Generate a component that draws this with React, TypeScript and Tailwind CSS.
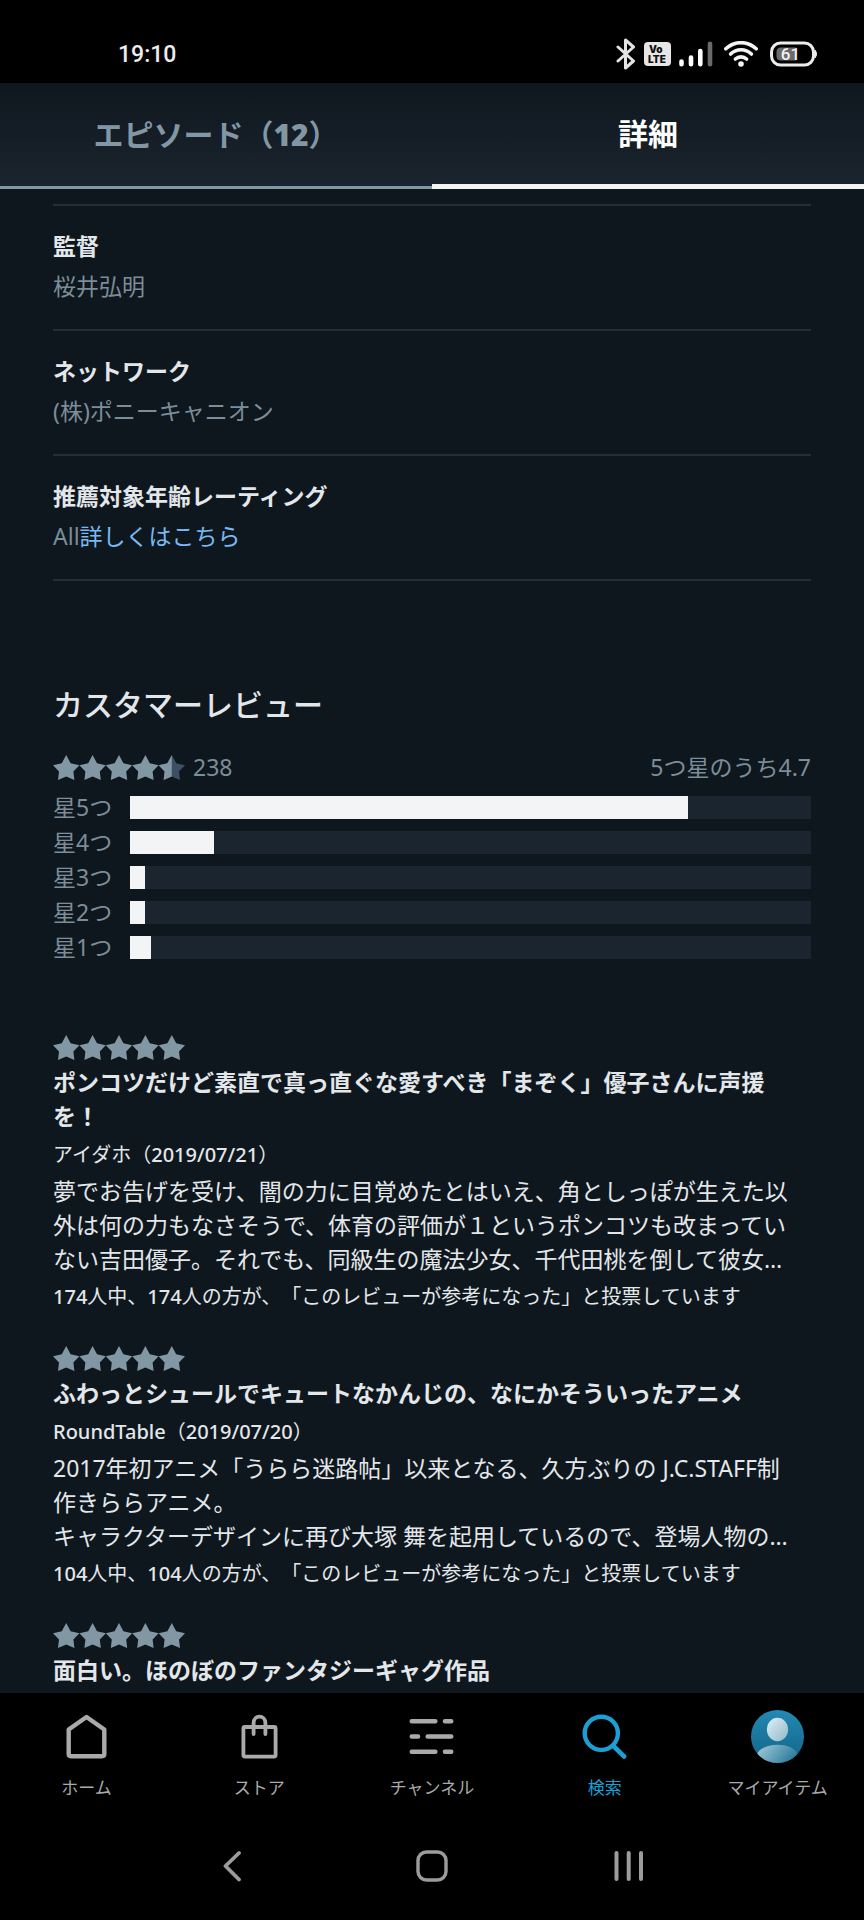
import React, { useState } from 'react';

interface Detail {
  label: string;
  value: string;
  link?: string;
}

interface Review {
  title: string;
  author: string;
  date: string;
  body?: string[];
  votes?: number;
}

const details: Detail[] = [
  { label: '監督', value: '桜井弘明' },
  { label: 'ネットワーク', value: '(株)ポニーキャニオン' },
  { label: '推薦対象年齢レーティング', value: 'All', link: '詳しくはこちら' },
];

const ratings = [
  { stars: 5, percent: 82 },
  { stars: 4, percent: 12.3 },
  { stars: 3, percent: 2.2 },
  { stars: 2, percent: 2.2 },
  { stars: 1, percent: 3.1 },
];

const reviews: Review[] = [
  {
    title: 'ポンコツだけど素直で真っ直ぐな愛すべき「まぞく」優子さんに声援を！',
    author: 'アイダホ',
    date: '2019/07/21',
    body: [
      '夢でお告げを受け、闇の力に目覚めたとはいえ、角としっぽが生えた以外は何の力もなさそうで、体育の評価が１というポンコツも改まっていない吉田優子。それでも、同級生の魔法少女、千代田桃を倒して彼女…',
    ],
    votes: 174,
  },
  {
    title: 'ふわっとシュールでキュートなかんじの、なにかそういったアニメ',
    author: 'RoundTable',
    date: '2019/07/20',
    body: [
      '2017年初アニメ「うらら迷路帖」以来となる、久方ぶりの J.C.STAFF制作きららアニメ。',
      'キャラクターデザインに再び大塚 舞を起用しているので、登場人物の…',
    ],
    votes: 104,
  },
  {
    title: '面白い。ほのぼのファンタジーギャグ作品',
    author: '',
    date: '',
  },
];

const STAR = 'M13.2 0 L17.6 8.2 L26.4 10.2 L20.4 16.6 L21.4 25 L13.2 21.6 L5 25 L6 16.6 L0 10.2 L8.8 8.2 Z';
const STAR_LEFT = 'M13.2 0 V21.6 L5 25 L6 16.6 L0 10.2 L8.8 8.2 Z';

const Stars = ({ half = false }: { half?: boolean }) => (
  <svg className="block h-[25px] w-[132px]" viewBox="0 0 132 25" role="img" aria-label={half ? '星4.5' : '星5'}>
    {[0, 1, 2, 3, 4].map((i) => (
      <g key={i} transform={`translate(${i * 26.4} 0)`}>
        <path d={STAR} fill={half && i === 4 ? '#3f4f63' : '#8197a4'} />
        {half && i === 4 && <path d={STAR_LEFT} fill="#8197a4" />}
      </g>
    ))}
  </svg>
);

// Latin letters and digits are set one step heavier than the kana around them
const SmallText = ({ text }: { text: string }) => (
  <>
    {text.split(/([\x21-\x7e]+)/).map((part, i) =>
      i % 2 === 1 ? <span key={i} className="font-medium">{part}</span> : part
    )}
  </>
);

const StatusBar = () => (
  <div className="flex h-[83px] items-center justify-between bg-black pt-6 pr-[47px] pl-[118px]">
    <span className="pt-0.5 font-['Roboto',sans-serif] text-[23px] leading-7 font-medium text-[#ededed]">19:10</span>
    <div className="flex items-center">
      <svg className="mr-2 h-8 w-5" viewBox="0 0 20 32" fill="none" stroke="#e4e4e4" strokeWidth="3" strokeLinecap="round" strokeLinejoin="round">
        <path d="M2 9 L17.5 23 L9.5 30 V2 L17.5 9 L2 23" />
      </svg>
      <svg className="mr-2 h-6 w-[27px]" viewBox="0 0 27 24">
        <rect width="27" height="24" rx="4" fill="#e6e6e6" />
        <text x="5" y="10.5" fontSize="10" fontWeight="900" fontFamily="Inter, sans-serif" fill="#111">Vo</text>
        <text x="4" y="20.5" fontSize="10" fontWeight="900" fontFamily="Inter, sans-serif" fill="#111">LTE</text>
      </svg>
      <svg className="mr-[11px] h-[26px] w-[34px]" viewBox="0 0 34 26" strokeWidth="4.6" strokeLinecap="round" stroke="#fff">
        <path d="M2.5 20.5 V23.2 M12 16.5 V23.2 M21.3 10 V23.2" />
        <path d="M31 2.8 V23.2" stroke="#6a6a6a" />
      </svg>
      <svg className="mr-3 h-[26px] w-[34px]" viewBox="0 0 34 26" fill="none" stroke="#f4f4f4" strokeWidth="3.6" strokeLinecap="round">
        <path d="M1.8 7.8 C10.5 -0.4 23.5 -0.4 32.2 7.8" />
        <path d="M6.6 13 C12.6 7.4 21.4 7.4 27.4 13" />
        <path d="M11.4 18 C14.6 15.2 19.4 15.2 22.6 18" />
        <circle cx="17" cy="23" r="2.8" fill="#f4f4f4" stroke="none" />
      </svg>
      <svg className="h-[26px] w-[47px]" viewBox="0 0 47 26">
        <rect x="1.5" y="2" width="42" height="22" rx="9" fill="none" stroke="#ececec" strokeWidth="3" />
        <path d="M45 9 L47 13 L45 17 Z" fill="#ececec" stroke="#ececec" />
        <path d="M11 6.5 H26 V19.5 H11 Q6.5 19.5 6.5 15 V11 Q6.5 6.5 11 6.5 Z" fill="#6b6b6b" />
        <text x="20.5" y="19" textAnchor="middle" fontSize="17" fontWeight="500" fontFamily="Roboto, sans-serif" fill="#f2f2f2">61</text>
      </svg>
    </div>
  </div>
);

const HomeIcon = () => (
  <svg className="h-[45px] w-[45px]" viewBox="0 0 45 45" fill="none" stroke="currentColor" strokeWidth="4.4" strokeLinejoin="round">
    <path d="M22.5 3 L40.3 15.5 V40 Q40.3 42.2 38 42.2 H7 Q4.7 42.2 4.7 40 V15.5 Z" />
  </svg>
);

const StoreIcon = () => (
  <svg className="h-[45px] w-[45px]" viewBox="0 0 45 45" fill="none" stroke="currentColor" strokeWidth="3.8" strokeLinecap="round" strokeLinejoin="round">
    <rect x="6.4" y="13" width="32.2" height="29.6" rx="1.5" />
    <path d="M16.6 20 V9 C16.6 0.6 28.4 0.6 28.4 9 V20" />
  </svg>
);

const ChannelIcon = () => (
  <svg className="h-[45px] w-[45px]" viewBox="0 0 45 45" fill="none" stroke="currentColor" strokeWidth="4.6" strokeLinecap="round">
    <path d="M2.8 7.2 H26.3 M36 7.2 H42.2" />
    <path d="M2.8 22.5 H9 M18.7 22.5 H42.2" />
    <path d="M2.8 37.8 H26.3 M36 37.8 H42.2" />
  </svg>
);

const SearchIcon = () => (
  <svg className="h-[45px] w-[45px]" viewBox="0 0 45 45" fill="none" stroke="currentColor" strokeWidth="4.4" strokeLinecap="round">
    <circle cx="19.3" cy="19.3" r="16.6" />
    <path d="M31.4 32 L42 42.4" strokeWidth="4.8" />
  </svg>
);

const AvatarIcon = () => (
  <svg className="h-[53px] w-[53px]" viewBox="0 0 53 53">
    <defs>
      <linearGradient id="avatar-bg" x1="0" y1="0" x2="0" y2="1">
        <stop offset="0" stopColor="#2389b4" />
        <stop offset="1" stopColor="#126486" />
      </linearGradient>
      <linearGradient id="avatar-head" x1="0" y1="0" x2="1" y2="1">
        <stop offset="0" stopColor="#e2eff4" />
        <stop offset="1" stopColor="#8fb9c9" />
      </linearGradient>
      <linearGradient id="avatar-body" x1="0" y1="0" x2="1" y2="0.4">
        <stop offset="0" stopColor="#a9cddb" />
        <stop offset="1" stopColor="#2f7f9f" />
      </linearGradient>
      <clipPath id="avatar-clip">
        <circle cx="26.5" cy="26.5" r="26.5" />
      </clipPath>
    </defs>
    <g clipPath="url(#avatar-clip)">
      <rect width="53" height="53" fill="url(#avatar-bg)" />
      <ellipse cx="26.5" cy="19.5" rx="10.6" ry="11.8" fill="url(#avatar-head)" />
      <path d="M6 44 C12 31.5 41 31.5 47 44 L40 53 H12 Z" fill="url(#avatar-body)" />
    </g>
  </svg>
);

const navItems = [
  { label: 'ホーム', icon: <HomeIcon /> },
  { label: 'ストア', icon: <StoreIcon /> },
  { label: 'チャンネル', icon: <ChannelIcon /> },
  { label: '検索', icon: <SearchIcon />, active: true },
  { label: 'マイアイテム', icon: <AvatarIcon /> },
];

const ReviewItem = ({ review }: { review: Review }) => (
  <article>
    <Stars />
    <h3 className="mt-[5px] text-[23px] leading-[34px] font-bold">{review.title}</h3>
    {review.body && (
      <>
        <p className="mt-[7px] text-xl leading-[30px]">
          <SmallText text={`${review.author}（${review.date}）`} />
        </p>
        <div className="mt-1 text-[23px] leading-[34px]">
          {review.body.map((line) => (
            <p key={line}>{line}</p>
          ))}
        </div>
        <p className="mt-1.5 text-xl leading-[30px]">
          <SmallText text={`${review.votes}人中、${review.votes}人の方が、「このレビューが参考になった」と投票しています`} />
        </p>
      </>
    )}
  </article>
);

const App: React.FC = () => {
  const [tab, setTab] = useState<'episodes' | 'details'>('details');

  const tabClass = (active: boolean) =>
    active
      ? 'h-[106px] border-b-[5px] border-[#f2f4f6] text-[30px] leading-10 font-bold text-white'
      : 'h-[106px] border-b-[3px] border-[#8197a4] text-[30px] leading-10 font-bold text-[#8197a4]';

  return (
    <div
      lang="ja"
      className="flex min-h-screen flex-col bg-[#0f171e] font-['Noto_Sans','Noto_Sans_CJK_JP',sans-serif] text-[#e3e7ea] [text-spacing-trim:space-all]"
    >
      <StatusBar />

      {/* Tabs */}
      <div role="tablist" className="grid grid-cols-2 bg-linear-to-b from-[#0f171e] to-[#1b252f]">
        <button role="tab" aria-selected={tab === 'episodes'} className={tabClass(tab === 'episodes')} onClick={() => setTab('episodes')}>
          エピソード（<span className="font-black">12</span>）
        </button>
        <button role="tab" aria-selected={tab === 'details'} className={tabClass(tab === 'details')} onClick={() => setTab('details')}>
          詳細
        </button>
      </div>

      <main className="flex-1 px-[53px] pt-[15px]">
        {/* Title details */}
        <dl className="border-b-2 border-[#252e37]">
          {details.map((item) => (
            <div key={item.label} className="border-t-2 border-[#252e37] pt-[23px] pb-[26px] text-[23px] leading-[34px]">
              <dt className="font-bold">{item.label}</dt>
              <dd className="mt-1.5 text-[#7b8d99]">
                {item.value}
                {item.link && <a href="#rating" className="text-[#79b8f3]">{item.link}</a>}
              </dd>
            </div>
          ))}
        </dl>

        {/* Review summary */}
        <section className="mt-[104px]">
          <h2 className="text-[30px] leading-10 font-medium">カスタマーレビュー</h2>
          <div className="mt-[25px] flex items-center text-[23px] leading-[34px] text-[#7b8d99]">
            <Stars half />
            <span className="ml-2">238</span>
            <span className="ml-auto">5つ星のうち4.7</span>
          </div>
          <ul className="mt-3 flex flex-col gap-3">
            {ratings.map((row) => (
              <li key={row.stars} className="flex h-[23px] items-center">
                <span className="w-[77px] text-[23px] leading-[23px] text-[#7b8d99]">星{row.stars}つ</span>
                <div className="h-full flex-1 bg-[#1b252f]">
                  <div className="h-full bg-[#f2f4f6]" style={{ width: `${row.percent}%` }} />
                </div>
              </li>
            ))}
          </ul>
        </section>

        {/* Reviews */}
        <section className="mt-[76px] flex flex-col gap-[34px] pr-3">
          {reviews.map((review) => (
            <ReviewItem key={review.title} review={review} />
          ))}
        </section>
      </main>

      {/* App navigation */}
      <footer className="bg-black">
        <nav className="grid grid-cols-5 pt-[17px] pb-3">
          {navItems.map((item) => (
            <button
              key={item.label}
              className={item.active ? 'flex flex-col items-center text-[#1c9fd3]' : 'flex flex-col items-center text-[#aaaaaa]'}
            >
              <span className="flex h-[53px] items-center">{item.icon}</span>
              <span className="mt-[13px] text-[17px] leading-6">{item.label}</span>
            </button>
          ))}
        </nav>

        {/* System buttons */}
        <div className="grid h-[108px] grid-cols-3 place-items-center px-[135px] text-[#9c9c9c]">
          <button aria-label="戻る">
            <svg className="h-8 w-8" viewBox="0 0 32 32" fill="none" stroke="currentColor" strokeWidth="3.8" strokeLinecap="round" strokeLinejoin="round">
              <path d="M21 3 L7.5 16 L21 29.5" />
            </svg>
          </button>
          <button aria-label="ホーム画面">
            <svg className="h-8 w-8" viewBox="0 0 32 32" fill="none" stroke="currentColor" strokeWidth="3.4">
              <rect x="2" y="2" width="28" height="28" rx="8.5" />
            </svg>
          </button>
          <button aria-label="履歴">
            <svg className="h-8 w-8" viewBox="0 0 32 32" fill="none" stroke="currentColor" strokeWidth="4" strokeLinecap="round">
              <path d="M2.5 3 V29 M14.7 3 V29 M27 3 V29" />
            </svg>
          </button>
        </div>
      </footer>
    </div>
  );
};

export default App;
